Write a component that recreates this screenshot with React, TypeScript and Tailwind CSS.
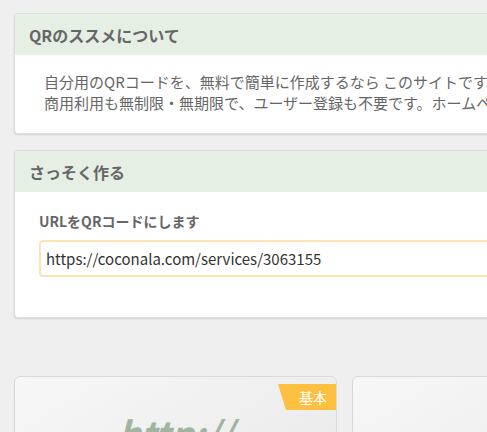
export default function App() {
  const font = { fontFamily: '"Noto Sans CJK JP", "Noto Sans", sans-serif' };
  return (
    <div className="w-[487px] h-[432px] overflow-hidden bg-[#efefef]" style={font}>
      <div className="w-[720px] px-[14px] pt-[13px] flex flex-col">
        <section className="rounded-[4px] border border-[#dcdcdc] bg-white shadow-[0_1px_2px_rgba(0,0,0,0.12)] overflow-hidden">
          <div className="h-[41px] bg-[#e5efe4] px-[14px] flex items-center">
            <h2 className="text-[16px] font-bold text-[#666]">QRのススメについて</h2>
          </div>
          <div className="pt-[16px] pb-[20px] pl-[29px] text-[15px] leading-[21px] text-[#666] whitespace-nowrap">
            <p>自分用のQRコードを、無料で簡単に作成するなら このサイトです。</p>
            <p>商用利用も無制限・無期限で、ユーザー登録も不要です。ホームページ</p>
          </div>
        </section>

        <section className="mt-[16px] rounded-[4px] border border-[#dcdcdc] bg-white shadow-[0_1px_2px_rgba(0,0,0,0.12)] overflow-hidden">
          <div className="h-[41px] bg-[#e5efe4] px-[14px] flex items-center">
            <h2 className="text-[16px] font-bold text-[#666]">さっそく作る</h2>
          </div>
          <div className="pt-[19px] pb-[40px] pl-[24px]">
            <label className="block text-[14px] font-bold leading-[20px] text-[#666]">URLをQRコードにします</label>
            <input
              readOnly
              value="https://coconala.com/services/3063155"
              className="mt-[9px] block w-[620px] h-[37px] rounded-[4px] border-2 border-[#fde3b3] bg-white px-[5px] text-[15px] text-[#333] outline-none"
              style={font}
            />
          </div>
        </section>

        <div className="mt-[58px] grid grid-cols-[323px_323px] gap-[15px]">
          <div className="relative h-[200px] rounded-[6px] border border-[#d8d8d8] bg-gradient-to-br from-[#f7f7f7] to-[#e6e6e6]">
            <div className="absolute right-0 top-[7px] h-[26px] w-[58px] bg-[#fdc040] [clip-path:polygon(0_0,100%_0,100%_100%,8px_100%)] flex items-center justify-end pr-[9px] text-[14px] text-white">
              基本
            </div>
            <div className="pt-[33px] text-center text-[36px] font-bold italic leading-[44px] text-[#9fb59f]">http://</div>
          </div>
          <div className="h-[200px] rounded-[6px] border border-[#d8d8d8] bg-gradient-to-br from-[#f7f7f7] to-[#e6e6e6]" />
        </div>
      </div>
    </div>
  );
}
